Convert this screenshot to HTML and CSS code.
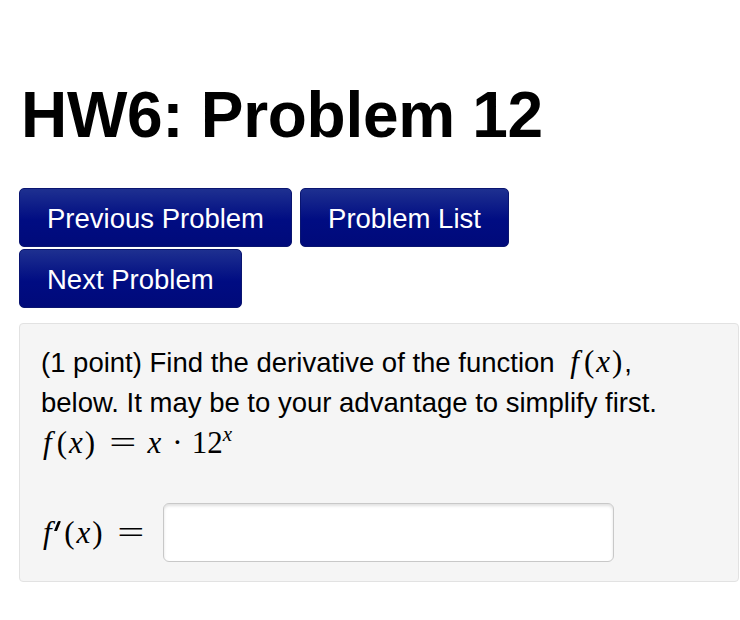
FILE: index.html
```html
<!DOCTYPE html>
<html>
<head>
<meta charset="utf-8">
<link rel="stylesheet" href="styles.css">
</head>
<body>
<div class="page">
  <h1 class="title">HW6: Problem 12</h1>
  <div class="nav">
    <a class="btn">Previous Problem</a>
    <a class="btn">Problem List</a>
    <a class="btn">Next Problem</a>
  </div>
  <div class="problem">
    <p class="text">(1 point) Find the derivative of the function <span class="math inline"><span class="mi f">f</span><span class="mo">(</span><span class="mi x">x</span><span class="mo">)</span></span>,<br>below. It may be to your advantage to simplify first.<br><span class="math"><span class="mi f">f</span><span class="mo">(</span><span class="mi x">x</span><span class="mo">)</span><span class="rel">=</span><span class="mi x">x</span><span class="bin">·</span><span class="mn">12</span><sup class="mi">x</sup></span></p>
    <div class="answer">
      <span class="math label"><span class="mi fp">f</span><span class="prime"></span><span class="mo">(</span><span class="mi x">x</span><span class="mo">)</span><span class="rel">=</span></span>
      <input class="field" type="text">
    </div>
  </div>
</div>
</body>
</html>
```
FILE: styles.css
```css
html, body { margin: 0; padding: 0; background: #fff; }
body { font-family: "Liberation Sans", Arial, sans-serif; color: #000; }
.page { padding: 0 1px 0 19px; }
.title {
  margin: 0;
  padding-top: 78px;
  padding-left: 2px;
  font-size: 64px;
  font-weight: bold;
  line-height: 74px;
  letter-spacing: -0.3px;
}
.nav {
  margin-top: 36px;
  display: flex;
  flex-wrap: wrap;
  column-gap: 8px;
  row-gap: 2px;
  width: 520px;
}
.btn {
  display: block;
  box-sizing: border-box;
  height: 59px;
  line-height: 59px;
  padding: 0 27px;
  color: #fff;
  font-size: 27.5px;
  border-radius: 5px;
  background: linear-gradient(#1e3090, #000c82 55%, #000a7a);
  border: 1px solid #0a1570;
  text-decoration: none;
}
.problem {
  margin-top: 15px;
  box-sizing: border-box;
  width: 720px;
  height: 259px;
  background: #f5f5f5;
  border: 1px solid #e2e2e2;
  border-radius: 4px;
  padding: 18px 20px 18px 21px;
}
.text {
  margin: 0;
  font-size: 27.5px;
  line-height: 40px;
}
.math { font-family: "Liberation Serif", "Times New Roman", serif; font-size: 31px; white-space: nowrap; }
.math.inline { margin-left: 6px; margin-right: 2px; }
.mi { font-style: italic; }
.mi.f { padding: 0 5px 0 2px; }
.mi.fp { padding: 0 3px 0 2px; }
.mi.x { padding: 0 2px; }
.prime {
  display: inline-block;
  width: 2.5px;
  height: 10px;
  background: #000;
  border-radius: 1px 1px 0.5px 0.5px;
  transform: skewX(-22deg);
  vertical-align: 12px;
  margin: 0 6px 0 1px;
}
.rel { display: inline-block; transform: scaleX(1.55); margin: 0 14px 0 19px; }
.bin { margin: 0 9px; }
.math sup { font-size: 21px; line-height: 0; vertical-align: 12px; }
.answer {
  margin-top: 39px;
  display: flex;
  align-items: center;
  gap: 10px;
}
.label { white-space: nowrap; }
.field {
  box-sizing: border-box;
  width: 451px;
  height: 59px;
  border: 1px solid #c8c8c8;
  border-radius: 6px;
  background: #fff;
  box-shadow: inset 0 2px 3px rgba(0,0,0,0.12);
  margin: 0;
}
```
